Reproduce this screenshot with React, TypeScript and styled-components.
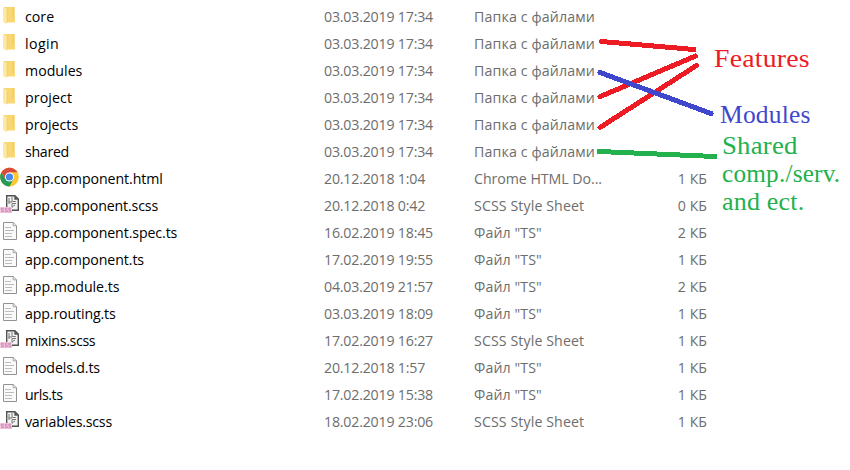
import React from "react";
import styled, { createGlobalStyle } from "styled-components";

const Global = createGlobalStyle`
  html, body { margin: 0; background: #fff; overflow: hidden; }
`;

const Page = styled.main`
  position: relative;
  width: 850px;
  height: 470px;
  overflow: hidden;
  background: #fff;
  font-family: "Open Sans", "Noto Sans", sans-serif;
  font-size: 14.2px;
`;

const List = styled.div`
  padding-top: 3px;
`;

const Row = styled.div`
  display: grid;
  grid-template-columns: 25px 299px 150px 150px 83px;
  height: 27px;
  line-height: 27px;
  white-space: nowrap;
`;

const IconCell = styled.div`
  height: 27px;
  svg { display: block; }
`;

const Name = styled.div<{ $track: number }>`
  color: #000;
  letter-spacing: ${(p) => p.$track}px;
`;

const Meta = styled.div<{ $track?: number; $end?: boolean }>`
  color: #6d6d6d;
  letter-spacing: ${(p) => p.$track ?? 0}px;
  text-align: ${(p) => (p.$end ? "right" : "left")};
`;

const Ink = styled.svg`
  position: absolute;
  inset: 0;
  pointer-events: none;
`;

const Notes = styled.aside`
  position: absolute;
  top: 45px;
  right: 0;
  width: 136px;
  display: flex;
  flex-direction: column;
  align-items: flex-start;
  font: 25px/28px "Liberation Serif", serif;
  white-space: nowrap;
`;

const Feature = styled.div`
  color: #ed1c24;
`;

const Module = styled.div`
  padding: 28px 0 3px 6px;
  color: #3f48cc;
`;

const Shared = styled.div`
  padding-left: 8px;
  color: #22b14c;
`;

const Line = styled.div<{ $stretch: number }>`
  letter-spacing: 0.2px;
  transform: scaleX(${(p) => p.$stretch});
  transform-origin: left;
`;

const Folder = () => (
  <svg width="24" height="27" viewBox="0 0 24 27">
    <path d="M4 4h10.5v11.5h.5v4H4z" fill="#f8d775" />
    <path d="M12 4h2.5v11.5H12z" fill="#f5cf68" />
    <path d="M3 4l4 2.5V20l-1 .8L3 18.5z" fill="#ffe9a2" />
    <path d="M7 6.5V20" stroke="#edcb6c" strokeWidth=".6" />
  </svg>
);

const Chrome = () => (
  <svg width="24" height="27" viewBox="0 0 24 27">
    <g transform="translate(0 -2)">
      <circle cx="9.5" cy="14" r="9.4" fill="#fcc934" />
      <path d="M9.5 14L5.5 16.3 1.4 9.3A9.4 9.4 0 0 0 9.5 23.4L13.5 16.3z" fill="#249c58" />
      <path d="M1.4 9.3A9.4 9.4 0 0 1 17.6 9.3H9.5L5.5 16.3z" fill="#d94b3d" />
      <circle cx="9.5" cy="14" r="4.6" fill="#fff" />
      <circle cx="9.5" cy="14" r="3.6" fill="#4688ed" />
    </g>
  </svg>
);

const Scss = () => (
  <svg width="24" height="27" viewBox="0 1 24 27">
    <path d="M6.7 4.7h8.2l3.4 3.4v11.2H6.7z" fill="#f3f3f3" stroke="#505050" strokeWidth="1.4" />
    <path d="M14.3 4.5v4.2h4z" fill="#555" />
    <path d="M9 7v6M12 6v5H8.5M12.5 10.5h3.3M12 17v-4.5h4M12.5 15.5l2.5-1.5" fill="none" stroke="#777" strokeWidth="1" />
    <path d="M0 16h12v6H0z" fill="#f3c9e0" />
    <path d="M3.7 17.3H1.4V19h2v1.8H1M7.4 17.3H5.2V19h2v1.8H4.8M11 17.3H8.8V19h2v1.8H8.4" fill="none" stroke="#c47aa8" strokeWidth=".8" />
  </svg>
);

const Doc = () => (
  <svg width="24" height="27" viewBox="0 1 24 27">
    <path d="M3.5 4.5h9.8l3.2 3.2v13.8h-13z" fill="#fafafa" stroke="#929292" />
    <path d="M13.2 4.5v3.3h3.3" fill="#eee" stroke="#929292" strokeWidth=".8" />
    <path d="M5 9.5h6M5 12.5h9M5 15.5h7M5 18.5h7" stroke="#b8bdbd" strokeWidth="1" />
  </svg>
);

const icons = { folder: Folder, chrome: Chrome, scss: Scss, doc: Doc };

type Item = [keyof typeof icons, string, number, string, string, string];

const items: Item[] = [
  ["folder", "core", 0, "03.03.2019 17:34", "Папка с файлами", ""],
  ["folder", "login", 0.4, "03.03.2019 17:34", "Папка с файлами", ""],
  ["folder", "modules", 0, "03.03.2019 17:34", "Папка с файлами", ""],
  ["folder", "project", 0.1, "03.03.2019 17:34", "Папка с файлами", ""],
  ["folder", "projects", 0, "03.03.2019 17:34", "Папка с файлами", ""],
  ["folder", "shared", -0.3, "03.03.2019 17:34", "Папка с файлами", ""],
  ["chrome", "app.component.html", -0.08, "20.12.2018 1:04", "Chrome HTML Do...", "1 КБ"],
  ["scss", "app.component.scss", -0.16, "20.12.2018 0:42", "SCSS Style Sheet", "0 КБ"],
  ["doc", "app.component.spec.ts", -0.11, "16.02.2019 18:45", "Файл \"TS\"", "2 КБ"],
  ["doc", "app.component.ts", -0.1, "17.02.2019 19:55", "Файл \"TS\"", "1 КБ"],
  ["doc", "app.module.ts", -0.06, "04.03.2019 21:57", "Файл \"TS\"", "2 КБ"],
  ["doc", "app.routing.ts", -0.14, "03.03.2019 18:09", "Файл \"TS\"", "1 КБ"],
  ["scss", "mixins.scss", -0.34, "17.02.2019 16:27", "SCSS Style Sheet", "1 КБ"],
  ["doc", "models.d.ts", -0.15, "20.12.2018 1:57", "Файл \"TS\"", "1 КБ"],
  ["doc", "urls.ts", -0.4, "17.02.2019 15:38", "Файл \"TS\"", "1 КБ"],
  ["scss", "variables.scss", -0.22, "18.02.2019 23:06", "SCSS Style Sheet", "1 КБ"],
];

const typeTrack: Record<string, number> = {
  "Папка с файлами": 0.14,
  "SCSS Style Sheet": 0.1,
  "Chrome HTML Do...": -0.05,
  "Файл \"TS\"": 0.1,
};

export default function App() {
  return (
    <Page>
      <Global />
      <List>
        {items.map(([icon, name, track, date, type, size]) => {
          const Icon = icons[icon];
          return (
            <Row key={name}>
              <IconCell><Icon /></IconCell>
              <Name $track={track}>{name}</Name>
              <Meta $track={-0.2}>{date}</Meta>
              <Meta $track={typeTrack[type]}>{type}</Meta>
              <Meta $end>{size}</Meta>
            </Row>
          );
        })}
      </List>
      <Ink width="850" height="470" viewBox="0 0 850 470" shapeRendering="crispEdges" fill="none" strokeWidth="5" strokeLinecap="round">
        <path d="M601.5 41.5L694 49.5M600 96.7L695.5 56M600 127.5L696.5 65.5" stroke="#ed1c24" />
        <path d="M600 72.5L711 113.5" stroke="#3f48cc" />
        <path d="M599 151.5L715 156.5" stroke="#22b14c" />
      </Ink>
      <Notes>
        <Feature><Line $stretch={1.11}>Features</Line></Feature>
        <Module><Line $stretch={1.02}>Modules</Line></Module>
        <Shared>
          <Line $stretch={1.07}>Shared</Line>
          <Line $stretch={1.01}>comp./serv.</Line>
          <Line $stretch={1.04}>and ect.</Line>
        </Shared>
      </Notes>
    </Page>
  );
}
